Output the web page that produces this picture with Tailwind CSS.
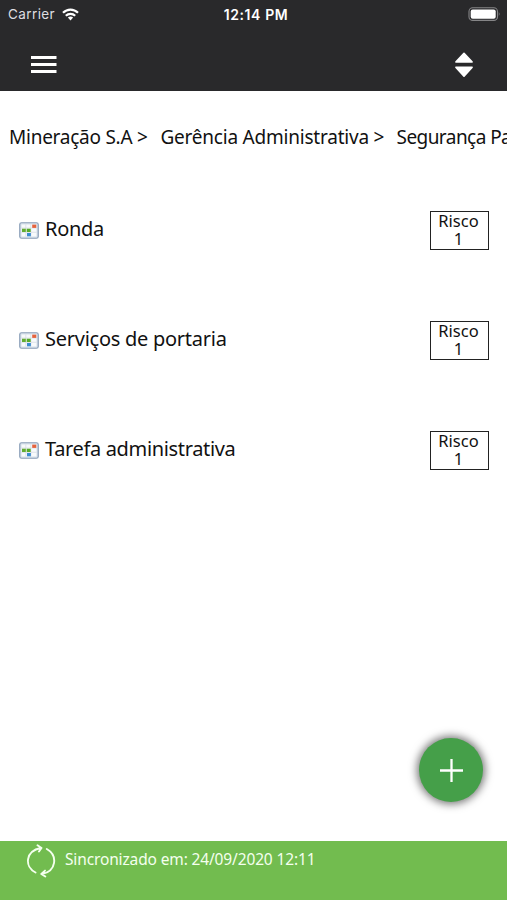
<!DOCTYPE html>
<html lang="pt-BR">
<head>
<meta charset="utf-8">
<title>Segurança Patrimonial</title>
<script src="https://cdn.jsdelivr.net/npm/@tailwindcss/browser@4"></script>
</head>
<body class="bg-white">
<svg class="hidden">
  <symbol id="cal" viewBox="0 0 20 17">
    <rect x=".75" y=".75" width="18.5" height="15.5" rx="1.8" fill="#d7e0ea" stroke="#8a9fb8" stroke-width="1.2"/>
    <rect x="2.5" y="2.5" width="15" height="12" fill="#f8fafb"/>
    <path d="M2.5 6h15M2.5 10.3h15M6.8 2.5v12M11.8 2.5v12" stroke="#d5dce4" stroke-width=".8"/>
    <rect x="13.2" y="2.6" width="4.1" height="3.3" fill="#e5623c"/>
    <rect x="3" y="6.7" width="3.8" height="3.3" fill="#63ad31"/>
    <rect x="7.7" y="6.7" width="4" height="3.3" fill="#58ab27"/>
    <rect x="8" y="11" width="3.9" height="3.3" fill="#3b8bd0"/>
  </symbol>
</svg>
<main class="relative flex h-[900px] w-[507px] flex-col overflow-hidden bg-white font-['Noto_Sans','Open_Sans',sans-serif] text-[#111]">
  <header class="h-[91px] shrink-0 bg-[#29292b] text-white">
    <div class="grid h-7 grid-cols-3 items-center pr-[6px] pl-[8px] font-['Inter',sans-serif]">
      <div class="flex items-center gap-[7px] text-[13.5px] tracking-[0.4px] text-[#dedee0]"><span>Carrier</span>
        <svg class="h-[13px] w-[17px]" viewBox="0 0 17 13" fill="none" stroke="#fff" stroke-width="2.2"><path d="M1 4.8C5.3.5 11.7.5 16 4.8M3.8 7.8C6.5 5.1 10.5 5.1 13.2 7.8"/><path d="M5.9 9.6Q8.5 7.5 11.1 9.6L8.5 12.4Z" fill="#fff" stroke="none"/></svg>
      </div>
      <div class="pl-[3px] text-center text-[14px] font-semibold tracking-[0.6px] whitespace-nowrap">12:14 PM</div>
      <svg class="h-[14px] w-[33px] justify-self-end" viewBox="0 0 33 14"><rect x="1" y=".8" width="28.5" height="12.6" rx="3.7" fill="none" stroke="#858587" stroke-width="1.1"/><rect x="2.7" y="2.5" width="25" height="9.2" rx="2" fill="#fff"/><path d="M30.8 5.1q1.7 2 0 4z" fill="#858587"/></svg>
    </div>
    <div class="flex h-[63px] items-start justify-between pr-[33px] pl-[31px]">
      <svg class="mt-7 h-[18px] w-[26px]" viewBox="0 0 26 18" fill="#fff"><path d="M0 0h25.5v3H0zM0 7h25.5v3H0zM0 14h25.5v3H0z"/></svg>
      <svg class="mt-6 h-[26px] w-5" viewBox="0 0 20 26" fill="#fff"><path d="M9.4.8Q10 .2 10.6.8L18.8 9.4Q19.2 10.8 18 10.8H2Q.8 10.8 1.2 9.4ZM9.4 24.7Q10 25.3 10.6 24.7L18.8 15.8Q19.2 14.4 18 14.4H2Q.8 14.4 1.2 15.8Z"/></svg>
    </div>
  </header>

  <nav class="flex h-[84px] shrink-0 overflow-hidden pt-[31px] pl-[9px] text-[19px] leading-[30px] whitespace-nowrap">
    <span class="w-[151.5px] shrink-0 tracking-[-0.25px]">Mineração S.A &gt;</span>
    <span class="w-[236px] shrink-0 tracking-[-0.22px]">Gerência Administrativa &gt;</span>
    <span class="shrink-0 tracking-[-0.55px]">Segurança Patrimonial</span>
  </nav>

  <ul class="flex-1">
    <li class="flex h-[110px] items-center pr-[18px] pl-[19px]">
      <svg class="mr-[6px] h-[17px] w-5"><use href="#cal"/></svg>
      <span class="relative -top-px flex-1 text-[20px] tracking-[-0.3px]">Ronda</span>
      <div class="h-[39px] w-[59px] border-[1.5px] border-[#222] pr-[2px] text-center text-[16.5px] leading-[18px]">Risco<br>1</div>
    </li>
    <li class="flex h-[110px] items-center pr-[18px] pl-[19px]">
      <svg class="mr-[6px] h-[17px] w-5"><use href="#cal"/></svg>
      <span class="relative -top-px flex-1 text-[20px] tracking-[-0.26px]">Serviços de portaria</span>
      <div class="h-[39px] w-[59px] border-[1.5px] border-[#222] pr-[2px] text-center text-[16.5px] leading-[18px]">Risco<br>1</div>
    </li>
    <li class="flex h-[110px] items-center pr-[18px] pl-[19px]">
      <svg class="mr-[6px] h-[17px] w-5"><use href="#cal"/></svg>
      <span class="relative -top-px flex-1 text-[20px] tracking-[-0.35px]">Tarefa administrativa</span>
      <div class="h-[39px] w-[59px] border-[1.5px] border-[#222] pr-[2px] text-center text-[16.5px] leading-[18px]">Risco<br>1</div>
    </li>
  </ul>

  <button class="absolute top-[738px] left-[419px] flex size-16 items-center justify-center rounded-full bg-[#459f49] shadow-[0_0_9px_2px_rgba(0,0,0,0.55)]" aria-label="Adicionar">
    <svg class="size-[23px]" viewBox="0 0 23 23" stroke="#fff" stroke-width="2.3"><path d="M0 11.5h23M11.5 0v23"/></svg>
  </button>

  <footer class="flex h-[59px] shrink-0 items-start bg-[#72bc4f] pl-[26px] text-white">
    <svg class="mt-[3px] mr-[8px] h-[34px] w-[30px]" viewBox="0 0 30 34" fill="none" stroke="#f4ffee" stroke-width="1.9" stroke-linecap="round" stroke-linejoin="round"><path d="M9.5 28.5C-2 22.500-.5 7 14.8 4M11.500 1.300L15.5 4 13 7.500M20.800 5C32 11.500 30.500 27 16 30M19 26.600L15.300 30 19.300 32.500"/></svg>
    <span class="mt-[7px] pl-px text-[15.5px] leading-[22px] tracking-[-0.14px] whitespace-nowrap text-[#f4ffee]">Sincronizado em: 24/09/2020 12:11</span>
  </footer>
</main>
</body>
</html>
